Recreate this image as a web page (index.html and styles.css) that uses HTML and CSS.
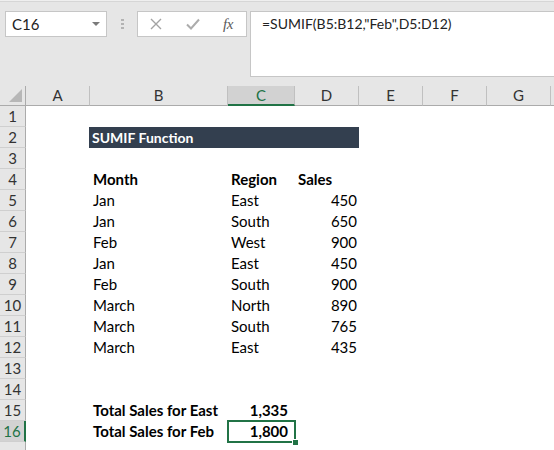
FILE: index.html
```html
<!DOCTYPE html>
<html>
<head>
<meta charset="utf-8">
<link rel="stylesheet" href="styles.css">
</head>
<body>
<div class="app">
  <div class="toolbar">
    <div class="namebox"><span>C16</span><i class="caret"></i></div>
    <div class="grip"><i></i><i></i><i></i></div>
    <div class="btns">
      <svg class="ico-x" width="12" height="12" viewBox="0 0 12 12"><path d="M1 1L11 11M11 1L1 11" stroke="#a3a3a3" stroke-width="1.4" fill="none"/></svg>
      <svg class="ico-ok" width="14" height="12" viewBox="0 0 14 12"><path d="M1 6.5L5 10.5L13 1.5" stroke="#acacac" stroke-width="2" fill="none"/></svg>
      <span class="fx">fx</span>
    </div>
    <div class="formula">=SUMIF(B5:B12,"Feb",D5:D12)</div>
  </div>
  <div class="sheet">
    <div class="corner"><svg width="13" height="13" viewBox="0 0 13 13"><path d="M13 0V13H0Z" fill="#b7b7b7"/></svg></div>
    <div class="ch">A</div>
    <div class="ch">B</div>
    <div class="ch active">C</div>
    <div class="ch">D</div>
    <div class="ch">E</div>
    <div class="ch">F</div>
    <div class="ch">G</div>
    <div class="ch last"></div>

    <div class="rh">1</div>
    <div class="rh">2</div><div class="title">SUMIF Function</div>
    <div class="rh">3</div>
    <div class="rh">4</div><div class="cell b bold">Month</div><div class="cell c bold">Region</div><div class="cell d bold">Sales</div>
    <div class="rh">5</div><div class="cell b">Jan</div><div class="cell c">East</div><div class="cell d num">450</div>
    <div class="rh">6</div><div class="cell b">Jan</div><div class="cell c">South</div><div class="cell d num">650</div>
    <div class="rh">7</div><div class="cell b">Feb</div><div class="cell c">West</div><div class="cell d num">900</div>
    <div class="rh">8</div><div class="cell b">Jan</div><div class="cell c">East</div><div class="cell d num">450</div>
    <div class="rh">9</div><div class="cell b">Feb</div><div class="cell c">South</div><div class="cell d num">900</div>
    <div class="rh">10</div><div class="cell b">March</div><div class="cell c">North</div><div class="cell d num">890</div>
    <div class="rh">11</div><div class="cell b">March</div><div class="cell c">South</div><div class="cell d num">765</div>
    <div class="rh">12</div><div class="cell b">March</div><div class="cell c">East</div><div class="cell d num">435</div>
    <div class="rh">13</div>
    <div class="rh">14</div>
    <div class="rh">15</div><div class="cell b bold">Total Sales for East</div><div class="cell c bold total">1,335</div>
    <div class="rh active">16</div><div class="cell b bold">Total Sales for Feb</div><div class="cell c bold total selected">1,800<span class="sel"><i class="handle"></i></span></div>
    <div class="rh"></div>
  </div>
</div>
</body>
</html>
```
FILE: styles.css
```css
html, body {
  margin: 0;
  padding: 0;
  background: #ffffff;
}
body {
  font-family: "Lato", "Liberation Sans", sans-serif;
  font-size: 14px;
  color: #000;
  overflow: hidden;
}
.app {
  width: 554px;
  height: 450px;
  overflow: hidden;
}
.toolbar {
  height: 86px;
  box-sizing: border-box;
  padding-top: 11px;
  display: flex;
  align-items: flex-start;
  background: linear-gradient(#efefef 0 1px, #d6d6d6 1px 2px, #e6e6e6 2px);
}
.namebox {
  margin-left: 5px;
  width: 102px;
  height: 26px;
  box-sizing: border-box;
  background: #fff;
  border: 1px solid #c6c6c6;
  display: flex;
  align-items: center;
  justify-content: space-between;
  padding: 0 6px 0 6px;
  line-height: 24px;
  font-size: 15px;
  color: #222;
}
.caret {
  width: 0;
  height: 0;
  border-left: 4px solid transparent;
  border-right: 4px solid transparent;
  border-top: 4px solid #7a7a7a;
}
.grip {
  margin-left: 14px;
  margin-top: 8px;
  display: flex;
  flex-direction: column;
  gap: 2px;
}
.grip i {
  display: block;
  width: 3px;
  height: 2px;
  background: #b3b3b3;
}
.btns {
  margin-left: 13px;
  width: 110px;
  height: 26px;
  box-sizing: border-box;
  background: #fff;
  border: 1px solid #c6c6c6;
  display: flex;
  align-items: center;
  padding-left: 12px;
  gap: 24px;
}
.fx {
  font-family: "Liberation Serif", serif;
  font-style: italic;
  font-size: 15px;
  color: #5a5a5a;
  margin-left: -1px;
  letter-spacing: -0.5px;
}
.formula {
  margin-left: 3px;
  flex: 1;
  margin-right: -10px;
  height: 66px;
  box-sizing: border-box;
  background: #fff;
  border: 1px solid #c6c6c6;
  padding: 2px 0 0 11px;
  line-height: 20px;
  color: #222;
}
.sheet {
  display: grid;
  grid-template-columns: 26px 64px 138px 67px 64px 64px 64px 64px 1fr;
  grid-template-rows: 20px;
  grid-auto-rows: 21px;
}
.corner {
  grid-column: 1;
  background: #e6e6e6;
  border-right: 1px solid #ababab;
  border-bottom: 1px solid #ababab;
  box-sizing: border-box;
  display: flex;
  align-items: flex-end;
  justify-content: flex-end;
  padding: 0 3px 3px 0;
}
.ch {
  background: #e6e6e6;
  border-right: 1px solid #c0c0c0;
  border-bottom: 1px solid #ababab;
  box-sizing: border-box;
  text-align: center;
  line-height: 19px;
  font-size: 15px;
  color: #333;
}
.ch.active {
  background: #d2d2d2;
  color: #217346;
  border-bottom: 2px solid #217346;
}
.ch.last {
  border-right: none;
}
.rh {
  grid-column: 1;
  background: #e6e6e6;
  border-right: 1px solid #ababab;
  border-bottom: 1px solid #cfcfcf;
  box-sizing: border-box;
  text-align: center;
  line-height: 21px;
  font-size: 15px;
  color: #333;
}
.rh.active {
  background: #d2d2d2;
  color: #217346;
  border-right: 2px solid #217346;
}
.title {
  grid-column: 3 / 6;
  background: #333f4f;
  color: #fff;
  font-weight: bold;
  padding: 0 3px;
  line-height: 21px;
  margin-left: -1px;
}
.cell {
  padding: 0 3px;
  line-height: 21px;
  font-size: 15px;
  white-space: nowrap;
}
.b { grid-column: 3; }
.c { grid-column: 4; }
.d { grid-column: 5; }
.bold { font-weight: bold; }
.num {
  text-align: right;
  padding-right: 2px;
}
.total {
  text-align: right;
  padding-right: 7px;
}
.selected {
  position: relative;
}
.sel {
  position: absolute;
  left: -1px;
  right: -1px;
  top: -1px;
  bottom: -1px;
  border: 2px solid #217346;
}
.handle {
  position: absolute;
  right: -5px;
  bottom: -5px;
  width: 5px;
  height: 5px;
  background: #217346;
  border: 1px solid #fff;
}
```
